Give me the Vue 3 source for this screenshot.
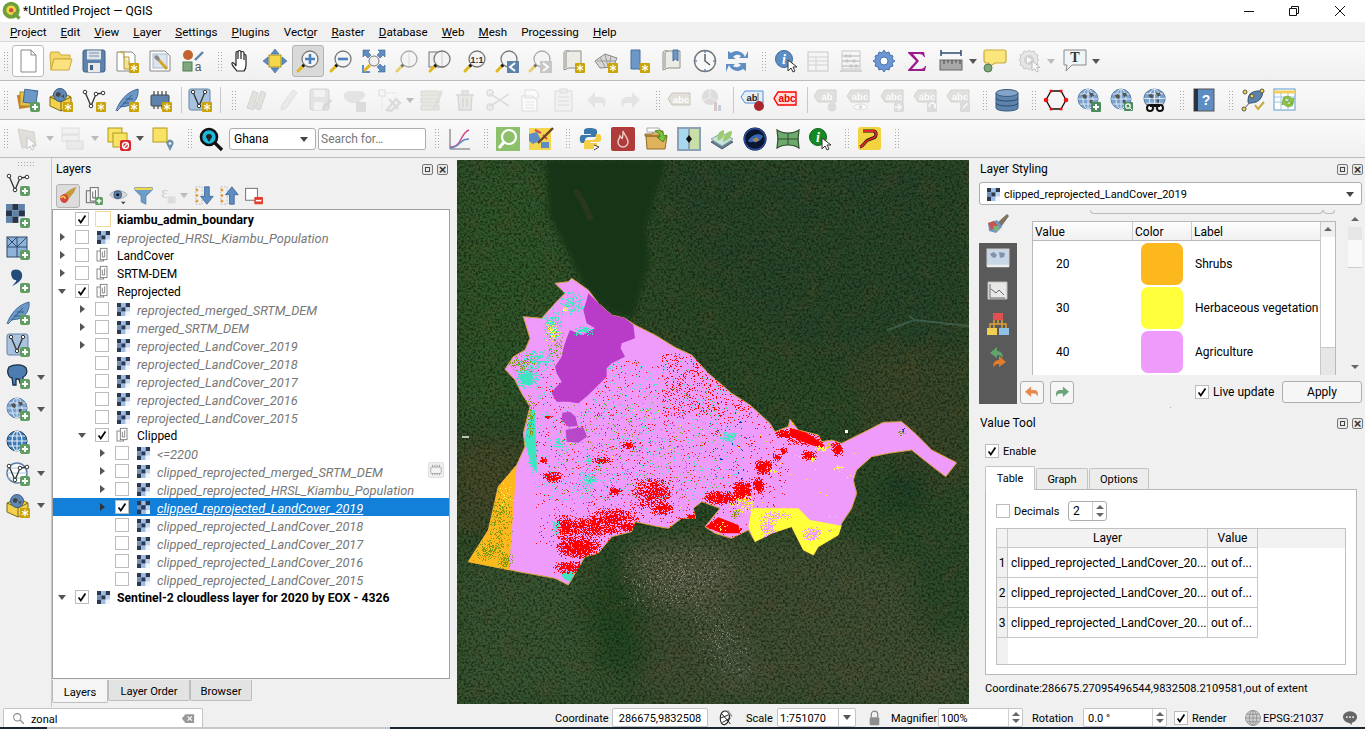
<template>
  <div class="qgis">
    <div class="titlebar">
      <svg class="logo" viewBox="0 0 24 24"><circle cx="11" cy="11" r="8" fill="#f2d648" stroke="#6f9f3a" stroke-width="4.5"/><circle cx="11" cy="11" r="2.6" fill="#c9503c"/><path d="M14 14l7 7" stroke="#6f9f3a" stroke-width="4"/></svg>
      <span class="wintitle">*Untitled Project — QGIS</span>
      <div class="winbtns">
        <svg viewBox="0 0 12 12" class="wmin"><path d="M1 6.5h10" stroke="#111"/></svg>
        <svg viewBox="0 0 12 12" class="wmax"><path d="M1.5 3.5h7v7h-7zM3.5 3.5v-2h7v7h-2" fill="none" stroke="#111"/></svg>
        <svg viewBox="0 0 12 12" class="wclose"><path d="M1 1l10 10M11 1L1 11" stroke="#111"/></svg>
      </div>
    </div>

    <div class="menubar">
      <span v-for="m in menus" :key="m[0] + m[1]" class="menu">{{ m[0] }}<u>{{ m[1] }}</u>{{ m[2] }}</span>
    </div>

    <div v-for="(row, r) in toolbars" :key="r" class="toolbar">
      <template v-for="(t, n) in row" :key="n">
        <span v-if="t.i === 'handle'" class="handle" :style="{ marginLeft: t.ml + 'px' }"></span>
        <span v-else-if="t.i === 'sep'" class="sep" :style="{ marginLeft: t.ml + 'px' }"></span>
        <span v-else-if="t.i === 'dd'" class="dd" :class="{ off: t.dis }" :style="{ marginLeft: t.ml + 'px' }"></span>
        <span v-else-if="t.i === 'combo'" class="combo" :style="{ marginLeft: t.ml + 'px', width: t.w + 'px' }">Ghana<i class="caret"></i></span>
        <span v-else-if="t.i === 'find'" class="findbox" :style="{ marginLeft: t.ml + 'px', width: t.w + 'px' }">Search for…</span>
        <span v-else class="tbtn" :class="{ pressed: t.on, boxed: t.box }" :style="{ marginLeft: t.ml + 'px' }">
          <svg class="ic" :class="{ dis: t.dis }" viewBox="0 0 24 24" v-html="icons[t.i]"></svg>
        </span>
      </template>
    </div>

    <div class="body">
      <div class="leftbar">
        <span class="hhandle"></span>
        <div v-for="b in leftIcons" :key="b.i" class="lbtn">
          <svg class="ic" viewBox="0 0 24 24" v-html="icons[b.i]"></svg>
          <i v-if="b.dd" class="dd"></i>
        </div>
      </div>

      <div class="layers">
        <div class="docktitle">
          <span>Layers</span>
          <span class="dockbtns"><i class="dfloat"></i><i class="dclose"></i></span>
        </div>
        <div class="layertools">
          <span v-for="(b, n) in layerTools" :key="n" class="ltool" :class="{ pressed: b.on }" :style="{ width: b.w + 'px' }">
            <svg class="ic20" viewBox="0 0 24 24" v-html="icons[b.i]"></svg>
            <i v-if="b.dd" class="dd off"></i>
          </span>
        </div>
        <div class="tree">
          <div v-for="(l, n) in layerRows" :key="n" class="trow" :class="{ sel: l.sel }" :style="{ paddingLeft: 6 + l.lvl * 20 + 'px' }">
            <i class="arrow" :class="l.arrow"></i>
            <span class="cb" :class="{ on: l.on }"><svg v-if="l.on" viewBox="0 0 14 14"><path d="M3 7.5l2.6 3.6L11 3" fill="none" stroke="#000" stroke-width="2"/></svg></span>
            <span class="licon">
              <svg v-if="l.kind === 'poly'" viewBox="0 0 16 16" class="k16"><rect x=".5" y=".5" width="15" height="15" fill="#fff" stroke="#f5d9a0"/></svg>
              <svg v-else-if="l.kind === 'group'" viewBox="0 0 24 24" class="k16" v-html="icons.group"></svg>
              <svg v-else viewBox="0 0 13 13" class="k13" v-html="checker"></svg>
            </span>
            <span class="lname" :class="l.style">{{ l.name }}</span>
            <span v-if="l.chip" class="chipbtn"><svg viewBox="0 0 24 24" v-html="icons.chipgrey"></svg></span>
          </div>
        </div>
        <div class="bottomtabs">
          <span class="btab active">Layers</span>
          <span class="btab border">Layer Order</span>
          <span class="btab browser">Browser</span>
        </div>
      </div>

      <div class="map">
        <svg viewBox="457 160 512 544" width="512" height="544" class="mapsvg">
          <defs>
            <filter id="blur12" x="-30%" y="-30%" width="160%" height="160%"><feGaussianBlur stdDeviation="12"/></filter>
            <filter id="blur3" x="-10%" y="-10%" width="120%" height="120%"><feGaussianBlur stdDeviation="2.5"/></filter>
            <filter id="noiseDark" x="0" y="0" width="100%" height="100%" color-interpolation-filters="sRGB">
              <feTurbulence type="fractalNoise" baseFrequency="0.42" numOctaves="3" seed="7"/>
              <feColorMatrix values="0 0 0 0 0.04 0 0 0 0 0.08 0 0 0 0 0.02 3.2 0 0 0 -1.35"/>
            </filter>
            <filter id="noiseLight" x="0" y="0" width="100%" height="100%" color-interpolation-filters="sRGB">
              <feTurbulence type="fractalNoise" baseFrequency="0.6" numOctaves="2" seed="21"/>
              <feColorMatrix values="0 0 0 0 0.55 0 0 0 0 0.6 0 0 0 0 0.35 0 2.8 0 0 -1.35"/>
            </filter>
            <filter id="noiseBrown" x="0" y="0" width="100%" height="100%" color-interpolation-filters="sRGB">
              <feTurbulence type="fractalNoise" baseFrequency="0.05" numOctaves="4" seed="5"/>
              <feColorMatrix values="0 0 0 0 0.42 0 0 0 0 0.3 0 0 0 0 0.16 2.4 0 0 0 -1.1"/>
            </filter>
          </defs>
          <rect x="457" y="160" width="512" height="544" fill="#2b4a28"/>
          <g filter="url(#blur12)">
            <path d="M457 160h90l30 130 40 30-20 90-140 10z" fill="#2f552c"/>
            <path d="M650 160h320v280l-130-60-130-90z" fill="#27442a"/>
            <path d="M840 350h130v140h-70z" fill="#38462b"/>
            <path d="M457 440h60l10 60-70 40z" fill="#454a2a"/>
            <path d="M457 560h130l40 144H457z" fill="#375530"/>
            <path d="M640 540h200l130 60v104H640z" fill="#414f36"/>
            <path d="M900 520h70v120h-50z" fill="#2b482c"/>
            <ellipse cx="905" cy="490" rx="24" ry="24" fill="#1c4025"/>
            <path d="M580 590h60l10 70-50 20z" fill="#214624"/>
          </g>
          <rect x="457" y="160" width="512" height="544" filter="url(#noiseBrown)" opacity=".22"/>
          <g filter="url(#blur12)">
            <path d="M625 545h100l20 40-45 25-60-20z" fill="#5f604e" opacity=".8"/>
            <path d="M690 600l40 20 30 60-30 10-20-50z" fill="#565d49" opacity=".7"/>
          </g>
          <rect x="457" y="160" width="512" height="544" filter="url(#noiseDark)" opacity=".6"/>
          <rect x="457" y="160" width="512" height="544" filter="url(#noiseLight)" opacity=".1"/>
          <path d="M546 160h120l-20 66 3 35-15 55-21-2-27-25-17-35-20-39z" fill="#193418" filter="url(#blur3)"/>
          <path d="M575 190l8 12 8 18" stroke="#3c3a22" stroke-width="6" fill="none" opacity=".5"/>
          <path :d="urban" fill="#b7b5a0" opacity=".55" shape-rendering="crispEdges"/>
          <path d="M887 330l28-10-6-4M915 320l54 6" stroke="#47705f" stroke-width="2" fill="none" opacity=".6"/>
          <path d="M462 437h7" stroke="#eee" stroke-width="1.5"/>
          <path d="M845 430h3v3h-3z" fill="#fff"/>

          <g transform="translate(455 260) scale(0.33333)">
            <polygon :points="outline" fill="#ee9bfb" stroke="#d8a33a" stroke-width="3"/>
            <path v-for="p in specks" :key="p.c + p.d.length" :d="p.d" :fill="p.c" shape-rendering="crispEdges"/>
            <polygon points="400,100 430,130 470,165 510,175 535,195 540,235 500,250 497,265 510,290 470,310 455,325 455,350 430,375 400,405 370,430 340,425 305,425 290,400 300,385 320,365 305,340 300,320 320,290 325,265 335,235 345,210 380,225 420,205 395,190 385,150 395,120" fill="#b93cc9"/>
            <polygon points="322,458 345,455 362,470 368,498 340,500 320,480" fill="#b648c9"/>
            <polygon points="332,510 360,505 385,502 396,530 370,548 335,545" fill="#b648c9"/>
            <polygon points="185,615 162,930 190,936 40,905 100,810 130,680" fill="#fdb81e"/>
            <polygon points="890,745 1030,745 1065,780 1160,797 1150,825 1090,860 1075,885 1045,870 1010,800 950,820 900,845 880,800" fill="#ffff3c"/>
            <polygon points="752,800 790,772 850,795 855,820 800,820" fill="#ff0000"/>
            <polygon points="1005,503 1055,518 1108,555 1108,568 1060,552 1005,528" fill="#ff0000"/>
            <polygon points="228,450 240,450 246,640 232,620 208,540" fill="#3ee4c0"/>
            <polygon points="190,345 232,335 232,375 200,370" fill="#3ee4c0"/>
            <polygon points="318,940 360,932 345,965 325,955" fill="#3ee4c0"/>
            <path v-for="p in topSpecks" :key="p.c + p.d.length" :d="p.d" :fill="p.c" shape-rendering="crispEdges"/>
          </g>
        </svg>
      </div>

      <div class="rightpanel">
        <div class="docktitle">
          <span>Layer Styling</span>
          <span class="dockbtns"><i class="dfloat"></i><i class="dclose"></i></span>
        </div>
        <div class="combo layercombo"><svg viewBox="0 0 13 13" class="k13" v-html="checker"></svg><span>clipped_reprojected_LandCover_2019</span><i class="caret"></i></div>
        <div class="styling">
          <div class="side">
            <div class="sidebrush"><svg class="ic" viewBox="0 0 24 24" v-html="icons.brush2"></svg></div>
            <div class="sidedark">
              <svg v-for="s in sideIcons" :key="s" class="ic" viewBox="0 0 24 24" v-html="icons[s]"></svg>
            </div>
          </div>
          <div class="stylemain">
            <div class="scrollarea">
              <div class="scrollinner">
                <div class="groupline"><span></span><span class="gl2"></span></div>
                <div class="legend">
                  <div class="legendbody">
                    <div class="lhead"><span class="c1">Value</span><span class="c2">Color</span><span class="c3">Label</span></div>
                    <div class="lrows">
                      <div v-for="c in classes" :key="c.color" class="lrow">
                        <span class="c1 val">{{ c.v }}</span>
                        <span class="c2"><i class="swatch" :style="{ background: c.color }"></i></span>
                        <span class="c3 lab">{{ c.label }}</span>
                      </div>
                    </div>
                  </div>
                  <div class="vscroll inner"><i class="up"></i><i class="thumb"></i><i class="rest"></i></div>
                </div>
              </div>
              <div class="vscroll outer"><i class="up"></i><i class="band"></i><i class="thumb"></i><i class="dn"></i></div>
            </div>
            <div class="actions">
              <span class="sbtn"><svg viewBox="0 0 24 24" v-html="icons.undoO"></svg></span>
              <span class="sbtn"><svg viewBox="0 0 24 24" v-html="icons.redoG"></svg></span>
              <span class="cb on live"><svg viewBox="0 0 14 14"><path d="M3 7.5l2.6 3.6L11 3" fill="none" stroke="#000" stroke-width="2"/></svg></span>
              <span class="livetext">Live update</span>
              <span class="applybtn">Apply</span>
            </div>
          </div>
        </div>
        <div class="splitdots"></div>
        <div class="docktitle valuetitle">
          <span>Value Tool</span>
          <span class="dockbtns"><i class="dfloat"></i><i class="dclose"></i></span>
        </div>
        <div class="enable">
          <span class="cb on"><svg viewBox="0 0 14 14"><path d="M3 7.5l2.6 3.6L11 3" fill="none" stroke="#000" stroke-width="2"/></svg></span>
          <span>Enable</span>
        </div>
        <div class="vtabs">
          <span class="vtab active">Table</span>
          <span class="vtab g">Graph</span>
          <span class="vtab o">Options</span>
        </div>
        <div class="vpane">
          <div class="decimals">
            <span class="cb"></span><span class="dectext">Decimals</span>
            <span class="spin"><span>2</span><i class="spinbtns"></i></span>
          </div>
          <div class="vtable">
            <div class="vhead"><span class="vcorner"></span><span class="vcol1">Layer</span><span class="vcol2">Value</span></div>
            <div v-for="n in 3" :key="n" class="vrow">
              <span class="vnum">{{ n }}</span>
              <span class="vcell1">clipped_reprojected_LandCover_20...</span>
              <span class="vcell2">out of...</span>
            </div>
            <div class="vempty"></div>
          </div>
        </div>
        <div class="coordline">Coordinate:286675.27095496544,9832508.2109581,out of extent</div>
      </div>
    </div>

    <div class="statusbar">
      <div class="locator">
        <svg viewBox="0 0 16 16" class="s14"><circle cx="6.5" cy="6.5" r="4.5" fill="none" stroke="#888" stroke-width="1.3"/><path d="M10 10l4.5 4.5" stroke="#888" stroke-width="1.6"/></svg>
        <span class="zonal">zonal</span>
        <svg viewBox="0 0 16 12" class="clearx"><path d="M5 1h10v10H5L1 6z" fill="#999"/><path d="M7.5 3.5l5 5M12.5 3.5l-5 5" stroke="#fff" stroke-width="1.3"/></svg>
      </div>
      <span class="st coordlab">Coordinate</span>
      <span class="stbox coordval">286675,9832508</span>
      <svg viewBox="0 0 24 24" class="mouse" v-html="icons.mouse"></svg>
      <span class="st scalelab">Scale</span>
      <span class="stbox scalebox"><span>1:751070</span><i class="caretbox"></i></span>
      <svg viewBox="0 0 16 20" class="lock"><path d="M4 9V5.5a4 4 0 018 0V9" fill="none" stroke="#888" stroke-width="1.6"/><rect x="2" y="9" width="12" height="10" rx="1.5" fill="#8d8d8d"/></svg>
      <span class="st maglab">Magnifier</span>
      <span class="stbox magbox"><span>100%</span><i class="spinbtns"></i></span>
      <span class="st rotlab">Rotation</span>
      <span class="stbox rotbox"><span>0.0 °</span><i class="spinbtns"></i></span>
      <span class="cb on rendercb"><svg viewBox="0 0 14 14"><path d="M3 7.5l2.6 3.6L11 3" fill="none" stroke="#000" stroke-width="2"/></svg></span>
      <span class="st renderlab">Render</span>
      <svg viewBox="0 0 24 24" class="epsg" v-html="icons.globegrey"></svg>
      <span class="st epsgtxt">EPSG:21037</span>
      <svg viewBox="0 0 18 18" class="msg"><ellipse cx="9" cy="8" rx="8" ry="6.5" fill="#666"/><path d="M6 13l5 4v-4z" fill="#666"/><circle cx="5.5" cy="8" r="1.1" fill="#fff"/><circle cx="9" cy="8" r="1.1" fill="#fff"/><circle cx="12.5" cy="8" r="1.1" fill="#fff"/></svg>
    </div>
    <div class="taskstrip"><i></i></div>
  </div>
</template>

<script setup>
const menus = [
  ['', 'P', 'roject'], ['', 'E', 'dit'], ['', 'V', 'iew'], ['', 'L', 'ayer'], ['', 'S', 'ettings'], ['', 'P', 'lugins'],
  ['Vect', 'o', 'r'], ['', 'R', 'aster'], ['', 'D', 'atabase'], ['', 'W', 'eb'], ['', 'M', 'esh'], ['Pro', 'c', 'essing'], ['', 'H', 'elp']
]

const checker = ['#2a3950', '#9dbde6', '#2a3950', '#6f8fb8', '#2a3950', '#b9d0ee', '#2a3950', '#9dbde6', '#f2f6fb']
  .map((c, i) => `<rect x="${(i % 3) * 4.33}" y="${Math.floor(i / 3) * 4.33}" width="4.34" height="4.34" fill="${c}"/>`).join('')

// badges shared by the toolbar icons
const star = `<rect x="14" y="14" width="10" height="10" rx="1" fill="#c9a30a"/><path d="M19 15.5v7M15.9 17.2l6.2 3.6M15.9 20.8l6.2-3.6" stroke="#fff" stroke-width="1.2"/>`
const plus = `<rect x="14" y="14" width="10" height="10" rx="2" fill="#5f9c62"/><path d="M19 16v6M16 19h6" stroke="#fff" stroke-width="2"/>`
const lens = (inner = '', fill = '#f4f4f4') => `<path d="M8 16l-6 6" stroke="#e0b81e" stroke-width="3" stroke-linecap="round"/><path d="M9 15l-2.5 2.5" stroke="#111" stroke-width="3"/><circle cx="14" cy="10" r="8" fill="${fill}" stroke="#777" stroke-width="1.3"/>${inner}`
const globe = `<circle cx="11" cy="11" r="10" fill="#7ba3cf" stroke="#5b80a8"/><path d="M1 11h20M11 1v20M3 6h16M3 16h16" stroke="#e4edf6" stroke-width=".9" fill="none"/><ellipse cx="11" cy="11" rx="5" ry="10" fill="none" stroke="#e4edf6" stroke-width=".9"/><path d="M5 7l3-1 2 2-1 3-3-1zM12 5h4l1 3-3 1zM13 12h3l-1 4-2-1z" fill="#555"/>`
const box3d = `<path d="M1 9l11-5 10 5v9l-10 5-11-5z" fill="#f2d24c" stroke="#7a6912"/><path d="M1 9l11 5 10-5M12 14v9" fill="none" stroke="#7a6912"/><circle cx="11" cy="7" r="6.5" fill="#5f87b3" stroke="#3d5f86"/><path d="M7 5l3-1 2 2-2 3-3-1zM12 8l3-1v3z" fill="#444"/>`
const vline = `<path d="M3 4l6 14 5-12 7-1" fill="none" stroke="#333" stroke-width="1.3"/><circle cx="3" cy="4" r="1.8" fill="#fff" stroke="#333"/><circle cx="9" cy="18" r="1.8" fill="#fff" stroke="#333"/><circle cx="14" cy="6" r="1.8" fill="#fff" stroke="#333"/><circle cx="21" cy="5" r="1.8" fill="#fff" stroke="#333"/>`
const feather = `<path d="M1 23C4 14 11 4 23 1c1 7-3 15-11 17l-7 1" fill="#6d97c4" stroke="#3e6a99"/><path d="M2 23L17 7M8 15h6M11 11h7" stroke="#2f5d8a" fill="none"/>`
const vbox = `<rect x="1" y="1" width="21" height="21" rx="2" fill="#a9c2de" stroke="#6384a8"/><path d="M5 4l6 14 6-14" fill="none" stroke="#333" stroke-width="1.3"/><circle cx="5" cy="4" r="1.7" fill="#fff" stroke="#333"/><circle cx="11" cy="18" r="1.7" fill="#fff" stroke="#333"/><circle cx="17" cy="4" r="1.7" fill="#fff" stroke="#333"/>`
const chip = c => `<rect x="3" y="7" width="18" height="11" rx="1" fill="${c}" stroke="#444"/><path d="M6 3v4M10 3v4M14 3v4M18 3v4M6 18v3M10 18v3M14 18v3M18 18v3" stroke="#444" stroke-width="1.2"/>`
const abc = (t, fill = '#e2e0d9', col = '#fff', stroke = '#c8c6be') => `<path d="M5 5h18v12H5L1 11z" fill="${fill}" stroke="${stroke}"/><text x="14" y="14.5" text-anchor="middle" font-family="Liberation Sans" font-weight="700" font-size="9.5" fill="${col}">${t}</text>`
const abcG = (t, extra) => `<g transform="translate(0 -3)">${abc(t, '#d4d2cb', '#fff', '#bbb')}</g>${extra}`
const sheet = `<path d="M3 4c0-2 2-3 4-2h13v17H8l-5 2z" fill="#ecebe6" stroke="#8f8f8a"/><path d="M8 2c-2 0-3 1-3 3v14" fill="none" stroke="#8f8f8a"/>`
const page = `<path d="M5 1h10l5 5v17H5z" fill="#fff" stroke="#888"/><path d="M15 1v5h5" fill="none" stroke="#888"/>`

const icons = {
  new: page,
  open: `<path d="M1 6l1-3h8l2 3h9v4H5l-3 11z" fill="#f5d66a" stroke="#c9a93a"/><path d="M5 10h18l-3 11H2z" fill="#fbe27f" stroke="#c9a93a"/>`,
  save: `<rect x="1" y="1" width="22" height="22" rx="2" fill="#5d83ad" stroke="#3f5f85"/><rect x="5" y="1.5" width="14" height="9" fill="#dfe5ec"/><path d="M7 4h10M7 7h10" stroke="#7d8ea3"/><rect x="6" y="14" width="12" height="9" fill="#e8e8e8"/><rect x="8" y="16" width="3" height="5" fill="#3f5f85"/>`,
  layoutnew: `<path d="M2 3h15l3 3v16H2z" fill="#fff" stroke="#888"/><path d="M5 3h4v17h12" fill="#f3e19a" stroke="#b0962a"/><path d="M8 8h6v8" fill="none" stroke="#b0962a"/>${star}`,
  layoutmgr: `<path d="M2 2h15l5 5v15H2z" fill="#fff" stroke="#888"/><rect x="5" y="5" width="14" height="14" fill="#dde6f0" stroke="#a9b7c8"/><path d="M9 9l10 11" stroke="#d0a52a" stroke-width="3"/><path d="M8 6a4 4 0 013 6l-3-1-2-3z" fill="#888"/>`,
  style: `<circle cx="7" cy="6" r="5" fill="#c4622f"/><path d="M14 11L22 3" stroke="#5d83ad" stroke-width="2.4"/><rect x="2" y="13" width="9" height="9" fill="#7fa87d" stroke="#507a50"/><text x="17" y="22" font-family="Liberation Sans" font-size="12" fill="#555" text-anchor="middle">a</text>`,
  hand: `<path d="M7 22c-2-3-6-6-5-8 1-1 3 1 4 3V4c0-2 2-2 2 0v6-7c0-2 3-2 3 0v7-6c0-2 3-2 3 0v7-4c0-2 2-2 2 0v9c0 4-1 5-2 6z" fill="#fff" stroke="#222" stroke-width="1.2"/>`,
  pan: `<rect x="6" y="6" width="12" height="12" fill="#f3d84a" stroke="#a68f1c"/><path d="M12 0l4 5H8zM12 24l4-5H8zM0 12l5-4v8zM24 12l-5-4v8z" fill="#5d8dc2" stroke="#3a628f" stroke-width=".6"/>`,
  zin: lens(`<path d="M14 5v10M9 10h10" stroke="#4a80bb" stroke-width="2.6"/>`),
  zout: lens(`<path d="M9 10h10" stroke="#4a80bb" stroke-width="2.6"/>`),
  zfull: `<path d="M1 1h7L6 3l3 3-3 3-3-3-2 2zM23 1h-7l2 2-3 3 3 3 3-3 2 2zM23 23h-7l2-2-3-3 3-3 3 3 2-2z" fill="#5d8dc2" stroke="#3a628f" stroke-width=".6"/><path d="M1 16v7h7" fill="none" stroke="#5d8dc2" stroke-width="2"/><path d="M8 16l-6 6" stroke="#e0b81e" stroke-width="3"/><circle cx="12" cy="12" r="5" fill="#f0f0f0" stroke="#777"/>`,
  zsel: lens(`<path d="M14 3v14" stroke="#ccc"/>`),
  zlayer: `<rect x="1" y="3" width="15" height="15" fill="#f0f0f0" stroke="#777"/>` + lens(`<path d="M14 3v14" stroke="#ccc"/>`),
  z11: lens(`<text x="14" y="13.5" text-anchor="middle" font-family="Liberation Sans" font-weight="700" font-size="9" fill="#333">1:1</text>`),
  zlast: lens() + `<rect x="12" y="12" width="12" height="12" fill="#5d83ad"/><path d="M20 14l-5 4 5 4" fill="none" stroke="#fff" stroke-width="2"/>`,
  znext: lens() + `<rect x="12" y="12" width="12" height="12" fill="#aaa"/><path d="M15 14l5 4-5 4" fill="none" stroke="#fff" stroke-width="2"/>`,
  newmap: sheet + star,
  new3d: `<path d="M1 12l10-7 12 4-4 9-13 1z" fill="#d8d8d4" stroke="#888"/><path d="M6 8l5 10M11 5l3 13M17 7l-2 11M3 12h18" stroke="#999" fill="none"/>${star}`,
  bookmark: `<path d="M5 1h9v14l4 5-3 2-2-2H5z" fill="#6d97c4" stroke="#46709e"/>${star}`,
  bookmarks: sheet + `<path d="M13 1h5v11l-2.5-2-2.5 2z" fill="#6d97c4" stroke="#46709e"/>`,
  clock: `<circle cx="12" cy="12" r="10.5" fill="#f8f8f8" stroke="#777" stroke-width="1.4"/><path d="M12 5v7l5 4" fill="none" stroke="#555" stroke-width="1.4"/><path d="M12 2v2M12 20v2M2 12h2M20 12h2" stroke="#5d8dc2" stroke-width="1.5"/>`,
  refresh: `<path d="M20 8A9 9 0 006 4L3 2v8h8L8 8a5.5 5.5 0 018-1l-2 2h9V2z" fill="#5d8dc2"/><path d="M4 16a9 9 0 0014 4l3 2v-8h-8l3 2a5.5 5.5 0 01-8 1l2-2H1v8z" fill="#5d8dc2"/>`,
  identify: `<circle cx="9" cy="10" r="8.5" fill="#5d8dc2" stroke="#3f6a99"/><text x="9" y="15" text-anchor="middle" font-family="Liberation Serif" font-style="italic" font-weight="700" font-size="14" fill="#fff">i</text><path d="M13 11v11l3-3 2 4 2-1-2-4h4z" fill="#fff" stroke="#333"/>`,
  table: `<rect x="2" y="3" width="20" height="19" fill="#f4f4f4" stroke="#aaa"/><path d="M2 8h20M2 12h20M2 16h20M10 8v14" stroke="#bbb"/>`,
  abacus: `<rect x="3" y="2" width="18" height="18" fill="none" stroke="#aaa"/><path d="M1 22h22M3 7h18M3 12h18M3 17h18" stroke="#aaa" stroke-width="1.3"/><path d="M7 7h.1M11 7h.1M15 12h.1M8 12h.1M12 17h.1M17 17h.1" stroke="#aaa" stroke-width="3.5" stroke-linecap="round"/>`,
  gear: `<path d="M12 1l2 3 3-1 1 3 3 1-1 3 3 2-3 2 1 3-3 1-1 3-3-1-2 3-2-3-3 1-1-3-3-1 1-3-3-2 3-2-1-3 3-1 1-3 3 1z" fill="#6d97d4" stroke="#4a73ad"/><circle cx="12" cy="12" r="4" fill="#fff" stroke="#4a73ad"/>`,
  sigma: `<path d="M3 3h16l1 5h-1c-1-2-2-3-5-3H8l6 7-7 8h8c3 0 4-1 5-3h1l-1 5H3v-1l8-9-8-8z" fill="#9c1b8c"/>`,
  ruler: `<path d="M2 4h20M2 1v6M22 1v6" stroke="#2f4d73" stroke-width="1.5"/><rect x="1" y="11" width="22" height="10" fill="#a8a8a8" stroke="#666"/><path d="M5 11v4M9 11v3M13 11v4M17 11v3M21 11v4" stroke="#444"/>`,
  speech: `<path d="M3 1h18c1 0 2 1 2 2v8c0 2-1 3-2 3H12l-6 4v-4H3c-1 0-2-1-2-3V3c0-1 1-2 2-2z" fill="#fbe67c" stroke="#c9a93a" stroke-width="1.2"/><circle cx="5" cy="19" r="4" fill="#7fa87d" stroke="#507a50"/>`,
  gearplay: `<path d="M11 1l2 2 3-1 1 3 3 1-1 3 2 2-2 2 1 3-3 1-1 3-3-1-2 2-2-2-3 1-1-3-3-1 1-3-2-2 2-2-1-3 3-1 1-3 3 1z" fill="#ddd" stroke="#aaa"/><circle cx="11" cy="11" r="5" fill="#bbb"/><path d="M9 8v6l5-3z" fill="#fff"/><path d="M14 12v10l2.5-2.5 2 3.5 2-1-2-3.5h3.5z" fill="#fff" stroke="#999"/>`,
  textT: `<path d="M1 1h22v15H9l-6 6 1-6H1z" fill="#eef5f8" stroke="#8a8a8a"/><text x="12" y="13" text-anchor="middle" font-family="Liberation Serif" font-weight="700" font-size="14" fill="#333">T</text>`,

  dsm: `<rect x="2" y="6" width="14" height="14" fill="#d07c2c" transform="rotate(-10 9 13)"/><rect x="4" y="4" width="14" height="14" fill="#e8c14a" stroke="#a68f1c"/><rect x="8" y="2" width="13" height="13" fill="#6d97c4" stroke="#3e6a99" transform="rotate(8 14 8)"/>${plus}`,
  gpkg: box3d + star,
  vnew: vline + star,
  feat: feather + star,
  chipstar: chip('#5d83ad') + star,
  vboxstar: vbox + star,
  pencils: `<path d="M3 20L9 3l5 2-5 17zM11 20l6-17 5 2-6 17z" fill="#d8d5cd" stroke="#bbb"/>`,
  pencil: `<path d="M5 22l1-5L17 2l4 3-11 15z" fill="#e4e4e4" stroke="#ccc"/>`,
  savepen: `<rect x="1" y="1" width="19" height="21" rx="2" fill="#d8d8d8" stroke="#bbb"/><rect x="5" y="2" width="11" height="7" fill="#f0f0f0"/><rect x="5" y="14" width="9" height="8" fill="#f0f0f0"/><path d="M13 22l1-4 7-7 2 2-7 7z" fill="#c4c4c4"/>`,
  blobstar: `<path d="M2 6c2-4 8-3 11-3s9-1 10 3-3 4-5 7-5 2-8 2-10-4-8-9z" fill="#d8d8d8"/><rect x="14" y="14" width="10" height="10" rx="1" fill="#ccc"/>`,
  toolx: `<rect x="1" y="2" width="6" height="6" fill="none" stroke="#ccc"/><path d="M7 5h12M4 8v12" stroke="#ddd"/><path d="M9 22L18 11l4 4-9 8zM11 11l9 10" stroke="#ccc" stroke-width="2.5" fill="none"/>`,
  listpen: `<path d="M1 3h18v5H1zM1 10h18v5H1zM1 17h18v5H1z" fill="#dedcd4" stroke="#c8c6be"/><path d="M12 22l2-5L21 2l2 1-6 16z" fill="#d0d0d0"/>`,
  trash: `<path d="M3 7h18M5 7l1 15h12l1-15M9 3h6v4H9zM10 10v9M14 10v9" fill="#e0ded7" stroke="#c4c4c4" stroke-width="1.4"/>`,
  scissors: `<path d="M3 5l20 13M3 19L23 6" stroke="#ccc" stroke-width="1.5"/><circle cx="4" cy="5" r="3" fill="none" stroke="#ccc" stroke-width="1.5"/><circle cx="4" cy="19" r="3" fill="none" stroke="#ccc" stroke-width="1.5"/>`,
  copy: `<path d="M6 2h10l3 3v5H6zM3 8h11l4 4v11H3z" fill="#fff" stroke="#ccc"/><path d="M6 14h9M6 17h9M6 20h9" stroke="#ddd"/>`,
  paste: `<rect x="3" y="3" width="17" height="20" fill="#f0f0f0" stroke="#ccc"/><rect x="8" y="1" width="7" height="4" fill="#e4e4e4" stroke="#ccc"/><path d="M6 9h11M6 13h11M6 17h11" stroke="#ccc"/>`,
  undo: `<path d="M10 4L2 12l8 8v-5h5c3 0 4 2 4 5 3-5 2-11-4-11h-5z" fill="#d8d8d8"/>`,
  redo: `<path d="M14 4l8 8-8 8v-5H9c-3 0-4 2-4 5-3-5-2-11 4-11h5z" fill="#d8d8d8"/>`,
  abc: abc('abc'),
  chartdis: `<circle cx="10" cy="9" r="8" fill="#ccc"/><path d="M10 9V1M10 9l7 4M10 9l-7 4" stroke="#eee"/><rect x="14" y="14" width="3" height="9" fill="#c9a7a7"/><rect x="18" y="17" width="3" height="6" fill="#a7b8c9"/>`,
  abpin: `<path d="M5 3h18v12H5L1 9z" fill="#e8eef6" stroke="#4c90e0"/><text x="12" y="12.5" text-anchor="middle" font-family="Liberation Sans" font-weight="700" font-size="9.5" fill="#222">ab</text><path d="M18 5v10" stroke="#aaa" stroke-width="2"/><circle cx="19" cy="18" r="5" fill="#a9262c"/>`,
  abcred: `<path d="M5 4h18v13H5L1 10.5z" fill="#fdd" stroke="#f00" stroke-width="1.4"/><text x="14" y="14" text-anchor="middle" font-family="Liberation Sans" font-weight="700" font-size="10" fill="#e00">abc</text>`,
  abpindis: abcG('ab', `<circle cx="19" cy="19" r="4.5" fill="#ccc"/>`),
  abceye: abcG('abc', `<path d="M7 19c4-4 11-4 15 0-4 4-11 4-15 0z" fill="#fff" stroke="#ccc"/><circle cx="14.5" cy="19" r="2" fill="#ccc"/>`),
  abcarr: abcG('abc', `<rect x="14" y="14" width="10" height="10" rx="1" fill="#ccc"/><path d="M15 19h5M18 16l3 3-3 3" stroke="#fff" stroke-width="1.6" fill="none"/>`),
  abcrot: abcG('abc', `<rect x="14" y="14" width="10" height="10" rx="1" fill="#ccc"/><path d="M16.5 19a3 3 0 115 1" stroke="#fff" stroke-width="1.5" fill="none"/>`),
  abcpen: abcG('abc', `<rect x="14" y="14" width="10" height="10" rx="1" fill="#ccc"/><path d="M16 22l1-3 4-4 1 1-4 4z" fill="#fff"/>`),
  db: `<path d="M1 5v15c0 4 22 4 22 0V5z" fill="#5d83ad" stroke="#3a5a80"/><ellipse cx="12" cy="5" rx="11" ry="3.5" fill="#82a4c9" stroke="#3a5a80"/><path d="M1 10c0 4 22 4 22 0M1 15c0 4 22 4 22 0" fill="none" stroke="#2d4a6d"/>`,
  hex: `<path d="M7 3h10l5 9-5 9H7l-5-9z" fill="none" stroke="#111" stroke-width="1.3"/><path d="M7 3h.1M17 3h.1M7 21h.1M17 21h.1" stroke="#e11" stroke-width="3" stroke-linecap="round"/><path d="M2 12h.1M22 12h.1" stroke="#e11" stroke-width="4.5" stroke-linecap="round"/>`,
  globeadd: globe + `<rect x="14" y="14" width="10" height="10" rx="1" fill="#4d8a5c"/><path d="M19 16v6M16 19h6" stroke="#fff" stroke-width="2"/>`,
  globefind: globe + `<rect x="14" y="14" width="9" height="9" rx="1" fill="#4d8a5c"/><circle cx="18" cy="18" r="2.2" fill="none" stroke="#fff" stroke-width="1.3"/><path d="M20 20l2 2" stroke="#fff"/>`,
  globebino: `<g transform="scale(1.05 .95)">${globe}</g><circle cx="7" cy="20" r="4" fill="#111"/><circle cx="17" cy="20" r="4" fill="#111"/><circle cx="7" cy="20" r="2" fill="#fff"/><circle cx="17" cy="20" r="2" fill="#fff"/><path d="M7 16h10v3H7z" fill="#111"/>`,
  help: `<rect x="2" y="1" width="20" height="22" fill="#5d8dc2" stroke="#555"/><rect x="2" y="1" width="4" height="22" fill="#2a3440"/><text x="14" y="17" text-anchor="middle" font-family="Liberation Sans" font-weight="700" font-size="14" fill="#fff">?</text>`,
  nodecheck: `<path d="M4 20l6-7L20 3" stroke="#555" fill="none"/><path d="M9 6c3-3 10-4 12-2s-2 9-6 10-8 2-8 0 0-6 2-8z" fill="#5d83ad" stroke="#33506f"/><path d="M14 17l3 4 6-7" stroke="#c9a93a" stroke-width="2" fill="none"/><circle cx="3" cy="21" r="2" fill="#f3d84a" stroke="#555"/><circle cx="4" cy="4" r="2" fill="#f3d84a" stroke="#555"/><circle cx="21" cy="3" r="2" fill="#f3d84a" stroke="#555"/><circle cx="11" cy="8" r="2" fill="#f3d84a" stroke="#555"/>`,
  tablesync: `<rect x="1" y="1" width="21" height="21" fill="#fff" stroke="#5d9bcf"/><path d="M1 4h21" stroke="#f3cf5a" stroke-width="3"/><path d="M1 9h21M1 14h21M8 5v17M15 5v17" stroke="#9cc4e4"/><path d="M10 10c3-3 8-2 9 1l2-1-1 6-5-3 2-1c-1-1-4-2-6 0z" fill="#8cc63f" stroke="#5a8c1f" stroke-width=".5"/><path d="M20 17c-3 3-8 2-9-1l-2 1 1-6 5 3-2 1c1 1 4 2 6 0z" fill="#8cc63f" stroke="#5a8c1f" stroke-width=".5"/>`,

  selarrow: `<path d="M2 2l16 3 2 14-14 2z" fill="#d4d0c6" stroke="#bbb8b0"/><path d="M11 10v12l3-3 2 4 2-1-2-4h4z" fill="#fff" stroke="#aaa"/>`,
  form: `<rect x="2" y="1" width="17" height="6" fill="#eee" stroke="#ccc"/><rect x="2" y="8" width="17" height="6" fill="#eee" stroke="#ccc"/><rect x="7" y="14" width="16" height="8" fill="#e4e4e4" stroke="#ccc"/>`,
  deselect: `<rect x="1" y="1" width="14" height="14" fill="#f9e264" stroke="#b09a1c"/><rect x="6" y="6" width="14" height="14" fill="#f9e264" stroke="#b09a1c"/><rect x="13" y="13" width="11" height="11" rx="2" fill="#d6282c"/><circle cx="18.5" cy="18.5" r="3" fill="none" stroke="#fff" stroke-width="1.4"/><path d="M16 21l5-5" stroke="#fff" stroke-width="1.4"/>`,
  selpin: `<rect x="2" y="1" width="14" height="14" fill="#f9e264" stroke="#b09a1c"/><path d="M19 24l-3-6a3.5 3.5 0 116 0z" fill="#6d90ad"/><circle cx="19" cy="16.5" r="1.3" fill="#fff"/>`,
  locate: `<circle cx="10" cy="10" r="8" fill="#1cb9dc" stroke="#111" stroke-width="2.6"/><path d="M16 16l7 7" stroke="#111" stroke-width="3.2"/><path d="M10 15l-3-5a3 3 0 116 0z" fill="#222"/>`,
  chart: `<path d="M3 2v20h20" fill="none" stroke="#666"/><path d="M3 20c5 0 8-2 10-6s5-10 9-11" fill="none" stroke="#d14a8b" stroke-width="1.5"/><path d="M3 21c6 0 9-4 11-6s5-3 8-3" fill="none" stroke="#5d8dc2" stroke-width="1.5"/>`,
  zoomg: `<rect width="24" height="24" fill="#8dc06a"/><circle cx="13" cy="10" r="7" fill="none" stroke="#fff" stroke-width="2.2"/><path d="M8 15l-5 6" stroke="#fff" stroke-width="3"/>`,
  mapbrush: `<rect y="1" width="22" height="22" fill="#f5d44e"/><path d="M0 7l8-2 4 8-8 4-4-3zM12 15h8v6h-8z" fill="#5d8dc2"/><path d="M6 3l6 3M14 8l4 4" stroke="#d14a5d" stroke-width="2"/><path d="M9 16L24 1" stroke="#6a4320" stroke-width="2.4"/>`,
  python: `<path d="M12 1C7 1 6 2 6 4v3h7v1H4c-3 0-3 8 0 8h3v-3c0-2 2-3 4-3h5c2 0 3-1 3-3V4c0-2-3-3-7-3z" fill="#3a78ae"/><path d="M13 22c5 0 6-1 6-3v-3h-7v-1h9c3 0 3-8 0-8h-3v3c0 2-2 3-4 3H9c-2 0-3 1-3 3v5c0 2 3 1 7 1z" fill="#f4cf45"/><path d="M16 18l5 2-5 3" fill="#fff" stroke="#444"/>`,
  flame: `<rect width="24" height="24" rx="2" fill="#b03b3b"/><path d="M12 4c1 4 5 6 5 11a5 5 0 01-10 0c0-3 2-4 2-6 1 1 2 2 2 3 1-2 1-5 1-8z" fill="none" stroke="#e8c9c0" stroke-width="1.5"/>`,
  folderarrow: `<path d="M1 7h7l2-3h9v5H1zM2 9h21l-2 13H3z" fill="#dfb25c" stroke="#8d6b2a"/><path d="M3 1h12l2 4H3z" fill="#fff" stroke="#aaa"/><path d="M11 4c5-2 8 0 9 5l3-1-4 7-6-5h3c0-3-2-5-5-6z" fill="#79c340" stroke="#4a8a1c"/>`,
  split: `<rect width="24" height="24" fill="#8aa1b8"/><rect x="2" y="2" width="9" height="20" fill="#a8d8f0"/><rect x="13" y="2" width="9" height="20" fill="#c8e0a8"/><path d="M12 8l3 4-3 4-3-4z" fill="#111"/>`,
  leaf: `<path d="M1 15l11-6 11 6-11 7z" fill="#667f8f" stroke="#4a6070"/><path d="M1 12l11-6 11 6-11 7z" fill="#c8e4e0" stroke="#88a8a8"/><path d="M8 14C6 8 9 4 14 3c0 5 0 8-6 11zM13 15c0-6 3-11 9-11 0 6-3 9-9 11z" fill="#9cca70"/>`,
  earth: `<circle cx="12" cy="12" r="11.5" fill="#0a1530"/><circle cx="12" cy="12" r="10.5" fill="none" stroke="#274d95" stroke-width="1.5"/><path d="M5 14c3-6 11-9 15-5-2 5-7 7-9 6s-3 2-6-1z" fill="#3568b4"/><path d="M9 13l5-3 2 3-3 2z" fill="#a88556"/>`,
  butterfly: `<path d="M1 3c3 2 6 3 11 3s8-1 11-3l-1 9 1 9c-3-2-7-3-11-3s-8 1-11 3l1-9z" fill="#6ea96e" stroke="#2f4f2f" stroke-width="1.2"/><path d="M12 6v12M1 12h22" stroke="#2f4f2f"/>`,
  igreen: `<circle cx="9" cy="10" r="8.5" fill="#158a23" stroke="#0c6218"/><text x="9" y="15" text-anchor="middle" font-family="Liberation Serif" font-style="italic" font-weight="700" font-size="14" fill="#fff">i</text><path d="M13 11v11l3-3 2 4 2-1-2-4h4z" fill="#fff" stroke="#333"/>`,
  route: `<rect width="23" height="23" rx="3" fill="#f2d23e"/><path d="M5 4h10c4 0 4 6 0 7l-5 2c-3 1-4 6-8 7" fill="none" stroke="#111" stroke-width="3.2"/><path d="M5 4h10c4 0 4 6 0 7l-5 2c-3 1-4 6-8 7" fill="none" stroke="#e3262c" stroke-width="1.8"/>`,

  vplus: vline + plus,
  checkplus: `<g transform="scale(.9)">${[0, 1, 2].flatMap(y => [0, 1, 2].map(x => `<rect x="${x * 7}" y="${y * 7}" width="7" height="7" fill="${(x + y) % 2 ? '#27354a' : (x === 2 && y === 2 ? '#dce8f6' : '#5d83ad')}"/>`)).join('')}</g>${plus}`,
  meshplus: `<rect x="1" y="1" width="20" height="20" fill="#8fb3d8" stroke="#2d4a6d"/><path d="M1 1l10 10M11 1L1 11M11 1v20M1 11h20M21 1L11 11" stroke="#2d4a6d"/>${plus}`,
  commaplus: `<path d="M7 1c6-2 10 2 9 7-1 4-5 7-10 9 3-3 5-5 4-6-4 1-7-8-3-10z" fill="#234d78"/>${plus}`,
  featplus: feather + plus,
  vboxplus: vbox + plus,
  elephant: `<path d="M3 2c5-3 14-3 17 1 2 4 0 8-3 9v6h-3l-1-4h-3v6H7L6 13C3 13 0 7 3 2z" fill="#4b7db0" stroke="#1c2f45" stroke-width="1.3"/>${plus}`,
  globeplus: globe + plus,
  globebig: `<circle cx="11" cy="11" r="10" fill="#3c79b8" stroke="#1c3d5f"/><path d="M1 11h20M11 1v20M3 6h16M3 16h16" stroke="#eaf1f8" stroke-width="1.1" fill="none"/><ellipse cx="11" cy="11" rx="5" ry="10" fill="none" stroke="#eaf1f8" stroke-width="1.1"/>${plus}`,
  globev: `<circle cx="11" cy="11" r="10" fill="#fff" stroke="#5b80a8" stroke-width="1.5"/><path d="M1 11h20M1 6h20M1 16h20" stroke="#a9c2de"/>${vline}${plus}`,
  gpkgsmall: box3d + star,

  brush: `<path d="M4 12l11-8 7-3-3 7-9 11z" fill="#c69a3a"/><path d="M1 14c4-5 8-5 10-1s0 7-3 8-6 0-7-7z" fill="#d6453c"/><path d="M2 15c3-3 5-2 6 1" fill="none" stroke="#f3d84a" stroke-width="2"/>`,
  brush2: `<path d="M11 11L21 2l2 2-8 11z" fill="#7d7360"/><path d="M2 11l9-3 5 7-6 6-7-2z" fill="#6d97c4"/><path d="M2 11l6-2 4 5-7 4z" fill="#c4574f"/><path d="M7 14h5l2 3-5 3z" fill="#7fb07a"/>`,
  group: `<rect x="3" y="6" width="10" height="15" fill="none" stroke="#777" stroke-width="1.3"/><rect x="8" y="2" width="10" height="17" fill="#fff" stroke="#777" stroke-width="1.3"/><path d="M11 7v8h3.5V5" fill="none" stroke="#777" stroke-width="1.3"/>`,
  groupadd: `<rect x="3" y="6" width="10" height="15" fill="none" stroke="#777" stroke-width="1.4"/><rect x="8" y="2" width="10" height="17" fill="#fff" stroke="#777" stroke-width="1.4"/><path d="M11 7v8h3.5V5" fill="none" stroke="#777" stroke-width="1.4"/>${plus}`,
  eye: `<path d="M1 11c6-7 15-7 22 0-7 7-16 7-22 0z" fill="#d8dee4" stroke="#999"/><circle cx="11" cy="11" r="5" fill="#5d83ad" stroke="#2d4a6d"/><circle cx="11" cy="11" r="2" fill="#111"/><path d="M15 20h6l-3 3z" fill="#444"/>`,
  funnel: `<path d="M1 2h22v3l-8 8v10l-6-3v-7L1 5z" fill="#6d9ec9" stroke="#4a7aa5"/><path d="M1 2h22v3H1z" fill="#f3d84a"/>`,
  eps: `<text x="7" y="15" text-anchor="middle" font-family="Liberation Serif" font-size="20" fill="#ccc">ε</text><rect x="11" y="13" width="10" height="9" fill="#ddd"/>`,
  expand: `<rect x="1" y="1" width="8" height="22" fill="none" stroke="#aaa" stroke-dasharray="2 2"/><path d="M1 5h3M1 12h3M1 19h3" stroke="#e79b2c" stroke-width="3"/><path d="M12 1h6v12h5l-8 10-8-10h5z" fill="#5d8dc2" stroke="#3a628f"/>`,
  collapse: `<rect x="1" y="1" width="8" height="22" fill="none" stroke="#aaa" stroke-dasharray="2 2"/><path d="M1 5h3M1 12h3M1 19h3" stroke="#e79b2c" stroke-width="3"/><path d="M12 23h6V11h5L15 1 7 11h5z" fill="#5d8dc2" stroke="#3a628f"/>`,
  remove: `<rect x="2" y="3" width="15" height="15" fill="#fff" stroke="#777" stroke-width="1.3"/><rect x="13" y="14" width="11" height="9" rx="1" fill="#e0402f"/><path d="M15 18.5h7" stroke="#fff" stroke-width="2"/>`,

  sidemap: `<rect x="1" y="3" width="22" height="17" fill="#c8d6e6" stroke="#ccc"/><path d="M4 8l4-2 3 3-2 3-3-1zM13 6l6 1-1 4-4 1z" fill="#7d93ad"/><path d="M1 20h22" stroke="#eee" stroke-width="2.5"/>`,
  sidechart: `<path d="M2 3h19v17H2z" fill="#e8e8e6" stroke="#bbb"/><path d="M4 5v14h15M5 10l5 4 3-3 5 5" fill="none" stroke="#667"/>`,
  sidetree: `<rect x="7" y="1" width="10" height="7" fill="#e05050"/><rect x="1" y="16" width="10" height="7" fill="#f0d050"/><rect x="13" y="16" width="10" height="7" fill="#8fc0e8"/><path d="M12 8v4M4 16v-4h16v4M8 8v8M16 8v8" stroke="#e0a03a" stroke-width="1.5" fill="none"/>`,
  sideundo: `<path d="M11 2L4 8l7 5v-3c3 0 5 1 5 4 2-5-1-8-5-8z" fill="#60a56a"/><path d="M13 11l7 6-7 5v-3c-3 0-5 1-5 4-2-5 1-8 5-8z" fill="#e07c2c"/>`,
  undoO: `<path d="M11 5l-7 6 7 6v-4h3c2 0 4 1 4 4 2-5 0-8-4-8h-3z" fill="#e88a4c"/>`,
  redoG: `<path d="M13 5l7 6-7 6v-4h-3c-2 0-4 1-4 4-2-5 0-8 4-8h3z" fill="#6ba476"/>`,
  chipgrey: chip('#f2f2f2').replaceAll('#444', '#888'),
  mouse: `<path d="M9 3c6-2 9 5 7 11s-7 9-10 5S4 5 9 3z" fill="#fff" stroke="#222" stroke-width="1.5"/><path d="M6 6l12 14M5 12l10-4M7 18l11-6" stroke="#222" stroke-width="1.3"/><path d="M14 2l6 8" stroke="#999" stroke-width="2"/>`,
  globegrey: `<circle cx="12" cy="12" r="10" fill="#cfcfcf" stroke="#888"/><path d="M2 12h20M12 2v20M4 7h16M4 17h16" stroke="#888" fill="none"/><ellipse cx="12" cy="12" rx="5" ry="10" fill="none" stroke="#888"/>`
}

// x is the centre of the item in the window, margins are worked out from those
function place(list) {
  let right = 0
  return list.map(([i, x, opt = {}]) => {
    const w = opt.w || (i === 'handle' ? 6 : i === 'sep' ? 1 : i === 'dd' ? 8 : 32)
    const ml = x - w / 2 - right
    right = x + w / 2
    return { i, ml, ...opt }
  })
}
const d = { dis: true }
const toolbars = [
  place([['handle', 6], ['new', 28, { box: true }], ['open', 61], ['save', 94], ['layoutnew', 127], ['layoutmgr', 160], ['style', 193], ['handle', 220],
    ['hand', 242], ['pan', 275], ['zin', 308, { on: true }], ['zout', 341], ['zfull', 374], ['zsel', 407, d], ['zlayer', 440], ['z11', 475], ['zlast', 507], ['znext', 540, d],
    ['newmap', 573], ['new3d', 606], ['bookmark', 638], ['bookmarks', 672], ['clock', 705], ['refresh', 737], ['handle', 764], ['identify', 787], ['table', 818, d], ['abacus', 851, d],
    ['gear', 884], ['sigma', 917], ['ruler', 951], ['dd', 973], ['speech', 995], ['gearplay', 1030, d], ['dd', 1051, d], ['textT', 1075], ['dd', 1096]]),
  place([['handle', 6], ['dsm', 28], ['gpkg', 61], ['vnew', 94], ['feat', 127], ['chipstar', 160], ['sep', 181], ['vboxstar', 200], ['sep', 220], ['handle', 234],
    ['pencils', 256, d], ['pencil', 288, d], ['savepen', 321, d], ['blobstar', 354, d], ['toolx', 390, d], ['dd', 410, d], ['listpen', 432, d], ['trash', 465, d], ['scissors', 498, d], ['copy', 531, d], ['paste', 564, d], ['undo', 597, d], ['redo', 630, d],
    ['handle', 658], ['abc', 679], ['chartdis', 712, d], ['sep', 733], ['abpin', 752], ['abcred', 785], ['sep', 807], ['abpindis', 825, d], ['abceye', 858, d], ['abcarr', 892, d], ['abcrot', 925, d], ['abcpen', 958, d],
    ['handle', 985], ['db', 1007], ['handle', 1034], ['hex', 1056], ['globeadd', 1089], ['globefind', 1122], ['globebino', 1155], ['handle', 1182], ['help', 1204], ['handle', 1231], ['nodecheck', 1253], ['tablesync', 1285]]),
  place([['handle', 6], ['selarrow', 28, d], ['dd', 50, d], ['form', 72, d], ['dd', 95, d], ['deselect', 119], ['dd', 140], ['selpin', 163], ['handle', 190], ['locate', 211],
    ['combo', 272.5, { w: 87 }], ['find', 372, { w: 108 }], ['handle', 437], ['chart', 459], ['handle', 486], ['zoomg', 508], ['mapbrush', 541], ['handle', 568],
    ['python', 590], ['flame', 623], ['folderarrow', 656], ['split', 689], ['leaf', 722], ['earth', 755], ['butterfly', 788], ['igreen', 821], ['handle', 847], ['route', 870], ['handle', 897]])
]

const leftIcons = [
  { i: 'vplus' }, { i: 'checkplus' }, { i: 'meshplus' }, { i: 'commaplus' }, { i: 'featplus' }, { i: 'vboxplus' },
  { i: 'elephant', dd: true }, { i: 'globeplus', dd: true }, { i: 'globebig' }, { i: 'globev', dd: true }, { i: 'gpkgsmall', dd: true }
]

const layerTools = [
  { i: 'brush', w: 24, on: true }, { i: 'groupadd', w: 26 }, { i: 'eye', w: 25 }, { i: 'funnel', w: 24 }, { i: 'eps', w: 36, dd: true }, { i: 'expand', w: 26 }, { i: 'collapse', w: 24 }, { i: 'remove', w: 24 }
]

const layerRows = [
  { lvl: 0, on: true, kind: 'poly', name: 'kiambu_admin_boundary', style: 'bold' },
  { lvl: 0, arrow: 'a-r', kind: 'raster', name: 'reprojected_HRSL_Kiambu_Population', style: 'off' },
  { lvl: 0, arrow: 'a-r', kind: 'group', name: 'LandCover' },
  { lvl: 0, arrow: 'a-r', kind: 'group', name: 'SRTM-DEM' },
  { lvl: 0, arrow: 'a-d', on: true, kind: 'group', name: 'Reprojected' },
  { lvl: 1, arrow: 'a-r', kind: 'raster', name: 'reprojected_merged_SRTM_DEM', style: 'off' },
  { lvl: 1, arrow: 'a-r', kind: 'raster', name: 'merged_SRTM_DEM', style: 'off' },
  { lvl: 1, arrow: 'a-r', kind: 'raster', name: 'reprojected_LandCover_2019', style: 'off' },
  { lvl: 1, kind: 'raster', name: 'reprojected_LandCover_2018', style: 'off' },
  { lvl: 1, kind: 'raster', name: 'reprojected_LandCover_2017', style: 'off' },
  { lvl: 1, kind: 'raster', name: 'reprojected_LandCover_2016', style: 'off' },
  { lvl: 1, kind: 'raster', name: 'reprojected_LandCover_2015', style: 'off' },
  { lvl: 1, arrow: 'a-d', on: true, kind: 'group', name: 'Clipped' },
  { lvl: 2, arrow: 'a-r', kind: 'raster', name: '<=2200', style: 'off' },
  { lvl: 2, arrow: 'a-r', kind: 'raster', name: 'clipped_reprojected_merged_SRTM_DEM', style: 'off', chip: true },
  { lvl: 2, arrow: 'a-r', kind: 'raster', name: 'clipped_reprojected_HRSL_Kiambu_Population', style: 'off' },
  { lvl: 2, arrow: 'a-r', on: true, kind: 'raster', name: 'clipped_reprojected_LandCover_2019', style: 'current', sel: true },
  { lvl: 2, kind: 'raster', name: 'clipped_reprojected_LandCover_2018', style: 'off' },
  { lvl: 2, kind: 'raster', name: 'clipped_reprojected_LandCover_2017', style: 'off' },
  { lvl: 2, kind: 'raster', name: 'clipped_reprojected_LandCover_2016', style: 'off' },
  { lvl: 2, kind: 'raster', name: 'clipped_reprojected_LandCover_2015', style: 'off' },
  { lvl: 0, arrow: 'a-d', on: true, kind: 'raster', name: 'Sentinel-2 cloudless layer for 2020 by EOX - 4326', style: 'bold' }
]

const sideIcons = ['sidemap', 'sidechart', 'sidetree', 'sideundo']
const classes = [
  { v: 20, color: '#fdb81e', label: 'Shrubs' },
  { v: 30, color: '#ffff3c', label: 'Herbaceous vegetation' },
  { v: 40, color: '#ee9bfb', label: 'Agriculture' },
  { v: '', color: '#ff0000', label: '' }
]

// region outline in the crop's 3x coordinates
const outlinePts = [[350, 55], [400, 90], [430, 130], [470, 165], [510, 175], [540, 195], [600, 225], [660, 262], [710, 285], [760, 340], [830, 400], [885, 435], [945, 490], [960, 515], [1000, 500], [1005, 478], [1030, 510], [1090, 525], [1100, 545], [1130, 540], [1160, 550], [1190, 535], [1220, 520], [1285, 487], [1340, 485], [1380, 520], [1430, 570], [1505, 608], [1472, 650], [1420, 610], [1370, 570], [1300, 580], [1250, 590], [1205, 630], [1195, 660], [1205, 700], [1190, 745], [1160, 790], [1150, 825], [1090, 860], [1075, 885], [1045, 870], [1010, 800], [950, 820], [900, 845], [880, 810], [830, 835], [780, 820], [750, 800], [795, 745], [740, 725], [715, 745], [722, 775], [680, 775], [640, 805], [610, 800], [540, 785], [530, 815], [470, 830], [430, 880], [390, 890], [340, 975], [300, 955], [190, 935], [40, 905], [100, 810], [130, 680], [185, 615], [210, 560], [205, 520], [225, 440], [200, 400], [180, 360], [150, 328], [175, 290], [210, 270], [225, 235], [205, 170], [260, 175], [300, 130], [330, 100], [300, 70], [340, 65]]
const outline = outlinePts.map(p => p.join(',')).join(' ')

let seed = 12345
const rnd = () => {
  seed = (seed * 16807) % 2147483647
  return seed / 2147483647
}
const gauss = () => rnd() + rnd() - 1

function inside(x, y) {
  let hit = false
  for (let i = 0, j = outlinePts.length - 1; i < outlinePts.length; j = i++) {
    const [xi, yi] = outlinePts[i]
    const [xj, yj] = outlinePts[j]
    if ((yi > y) !== (yj > y) && x < ((xj - xi) * (y - yi)) / (yj - yi) + xi) hit = !hit
  }
  return hit
}
const cell = (x, y) => `M${Math.round(x / 3) * 3} ${Math.round(y / 3) * 3}h3v3h-3z`

function scatter(colour, n, box) {
  let path = ''
  for (let k = 0; k < n; k++) {
    const x = box[0] + rnd() * (box[2] - box[0])
    const y = box[1] + rnd() * (box[3] - box[1])
    if (inside(x, y)) path += cell(x, y)
  }
  return { c: colour, d: path }
}
function clusters(colour, list) {
  let path = ''
  for (const [cx, cy, rx, ry, n] of list) {
    for (let k = 0; k < n; k++) {
      const x = cx + gauss() * rx
      const y = cy + gauss() * ry
      if (inside(x, y)) path += cell(x, y)
    }
  }
  return { c: colour, d: path }
}

const specks = [
  scatter('#ff0000', 1300, [240, 300, 1000, 860]),
  scatter('#3ee4c0', 1100, [240, 300, 860, 720]),
  scatter('#7f9a10', 320, [300, 380, 800, 720]),
  scatter('#b648c9', 260, [300, 450, 700, 760]),
  scatter('#ffff3c', 60, [300, 450, 1200, 800]),
  scatter('#ff0000', 600, [620, 280, 900, 470]),
  scatter('#0a3cc8', 20, [760, 480, 900, 660])
]
const topSpecks = [
  clusters('#ff0000', [[1050, 535, 60, 24, 300], [985, 520, 28, 14, 260], [1145, 565, 18, 24, 200], [1060, 585, 24, 16, 140], [985, 572, 12, 10, 60], [925, 620, 26, 24, 380], [965, 590, 20, 12, 60],
    [800, 712, 60, 22, 600], [860, 690, 30, 30, 520], [910, 675, 18, 26, 240], [790, 795, 34, 20, 100], [835, 805, 26, 14, 100], [708, 768, 14, 8, 90],
    [370, 860, 70, 36, 1100], [340, 920, 50, 20, 260], [330, 800, 34, 40, 340], [420, 800, 90, 32, 800], [480, 770, 80, 28, 500], [520, 800, 30, 14, 180], [590, 700, 65, 50, 700], [620, 745, 36, 20, 220],
    [480, 692, 20, 12, 110], [290, 650, 32, 18, 180], [265, 600, 12, 10, 50], [440, 600, 32, 10, 110], [520, 555, 22, 12, 80], [280, 470, 14, 4, 20]]),
  clusters('#3ee4c0', [[215, 350, 40, 36, 300], [240, 300, 60, 36, 220], [350, 130, 40, 40, 170], [290, 190, 32, 50, 200], [385, 210, 32, 16, 100], [400, 660, 28, 28, 130], [310, 550, 14, 20, 50], [300, 800, 16, 24, 60], [820, 530, 30, 18, 100], [400, 600, 12, 12, 30], [230, 590, 16, 60, 130]]),
  clusters('#7f9a10', [[130, 780, 44, 100, 280], [100, 870, 54, 34, 170], [150, 900, 26, 28, 100], [195, 310, 46, 30, 120], [225, 470, 14, 70, 90], [300, 260, 28, 60, 70], [1340, 520, 12, 10, 14], [840, 760, 14, 16, 35]]),
  clusters('#ffff3c', [[290, 215, 26, 36, 70], [330, 148, 8, 8, 25], [1095, 565, 20, 10, 40], [1075, 597, 12, 8, 22], [860, 730, 40, 30, 110], [1150, 622, 18, 10, 24], [950, 632, 18, 6, 14], [790, 800, 28, 18, 20], [150, 700, 26, 46, 20]]),
  clusters('#ee9bfb', [[1070, 820, 32, 22, 160], [940, 800, 28, 34, 170], [960, 765, 56, 14, 90], [1130, 810, 12, 6, 8]]),
  clusters('#fdb81e', [[1120, 555, 8, 10, 14], [870, 720, 14, 24, 22], [1010, 490, 5, 14, 14]]),
  clusters('#0a3cc8', [[1345, 510, 6, 6, 7], [860, 655, 7, 4, 5], [795, 595, 4, 4, 4], [855, 485, 3, 3, 3]])
]

let urbanPath = ''
for (let k = 0; k < 420; k++) {
  const t = rnd()
  const x = t < 0.7 ? 675 + gauss() * 60 : 722 + gauss() * 32
  const y = t < 0.7 ? 580 + gauss() * 35 : 640 + gauss() * 40
  urbanPath += `M${Math.round(x)} ${Math.round(y)}h1v1h-1z`
}
const urban = urbanPath
</script>

<style scoped>
.qgis { width: 1365px; height: 729px; display: flex; flex-direction: column; overflow: hidden; background: #f0f0f0; font: 12px Roboto, sans-serif; color: #000; }
.titlebar { height: 22px; flex: none; background: #fff; display: flex; align-items: center; }
.logo { width: 20px; height: 20px; margin-left: 2px; }
.wintitle { margin-left: 1px; font-size: 12px; }
.winbtns { margin-left: auto; display: flex; align-items: center; }
.winbtns svg { width: 12px; height: 12px; }
.wmin { margin-right: 33px; }
.wmax { margin-right: 34px; }
.wclose { margin-right: 19px; }
.menubar { height: 19px; flex: none; display: flex; align-items: center; padding-left: 10px; gap: 14px; background: #f0f0f0; border-bottom: 1px solid #d9d9d9; font-size: 11.6px; }
.toolbar { height: 38px; flex: none; display: flex; align-items: center; background: linear-gradient(#fafafa, #f0f0f0); border-bottom: 1px solid #bbb; }
.toolbar:nth-of-type(5) { height: 37px; }
.handle { width: 6px; height: 21px; flex: none; background-image: radial-gradient(circle, #aaa .7px, transparent .9px); background-size: 3px 3px; }
.sep { width: 1px; height: 26px; flex: none; background: #c8c8c8; }
.dd { flex: none; width: 0; height: 0; border-left: 4px solid transparent; border-right: 4px solid transparent; border-top: 5px solid #555; }
.dd.off { border-top-color: #bbb; }
.tbtn { width: 32px; height: 32px; flex: none; display: flex; align-items: center; justify-content: center; border: 1px solid transparent; border-radius: 3px; box-sizing: border-box; }
.tbtn.pressed { background: #d9d9d9; border-color: #b4b4b4; }
.tbtn.boxed { background: #fff; border-color: #bcbcbc; }
.ic { width: 24px; height: 24px; flex: none; overflow: visible; }
.ic.dis { opacity: .6; }
.ic20 { width: 19px; height: 19px; flex: none; overflow: visible; }
.combo { height: 22px; flex: none; box-sizing: border-box; display: flex; align-items: center; padding: 1px 0 0 4px; background: #fff; border: 1px solid #adadad; border-radius: 3px; }
.caret { margin-left: auto; margin-right: 7px; width: 0; height: 0; border-left: 4px solid transparent; border-right: 4px solid transparent; border-top: 5px solid #444; }
.findbox { height: 22px; flex: none; box-sizing: border-box; display: flex; align-items: center; padding: 1px 0 0 2px; background: #fff; border: 1px solid #adadad; border-radius: 2px; color: #777; }

.body { height: 549px; flex: none; display: flex; }
.leftbar { width: 51px; flex: none; border-right: 1px solid #c8c8c8; display: flex; flex-direction: column; align-items: flex-start; }
.hhandle { width: 18px; height: 6px; margin: 3px 0 0 17px; flex: none; background-image: radial-gradient(circle, #aaa .7px, transparent .9px); background-size: 3px 3px; }
.lbtn { height: 32.2px; flex: none; display: flex; align-items: center; padding-left: 6px; gap: 7px; }
.lbtn:first-of-type { margin-top: 1px; }
.layers { width: 398px; flex: none; display: flex; flex-direction: column; }
.docktitle { height: 24px; flex: none; box-sizing: border-box; display: flex; align-items: center; padding: 0 2px 2px 4px; }
.dockbtns { margin-left: auto; display: flex; gap: 4px; }
.dfloat, .dclose { width: 11px; height: 11px; box-sizing: border-box; border: 1px solid #777; border-radius: 2px; background: #e9e9e9; display: block; position: relative; }
.dfloat::after { content: ""; position: absolute; left: 2px; top: 2px; width: 3px; height: 3px; border: 1px solid #444; }
.dclose::after { content: "×"; position: absolute; left: 0; top: -3px; width: 9px; font: 700 13px/15px "Liberation Sans", sans-serif; text-align: center; color: #333; }
.layertools { height: 27px; flex: none; display: flex; align-items: center; padding-left: 4px; }
.ltool { height: 24px; flex: none; box-sizing: border-box; display: flex; align-items: center; justify-content: center; gap: 2px; border: 1px solid transparent; border-radius: 3px; }
.ltool.pressed { background: #dcdcdc; border-color: #b4b4b4; }
.tree { height: 470px; flex: none; box-sizing: border-box; border: 1px solid #a0a0a0; background: #fff; }
.trow { height: 18px; display: flex; align-items: center; position: relative; white-space: nowrap; }
.trow.sel { background: #127fd9; }
.arrow { width: 8px; height: 8px; flex: none; margin-right: 4px; margin-left: -1px; position: relative; }
.a-r::after { content: ""; position: absolute; left: 2px; top: 0; border-left: 5px solid #555; border-top: 4px solid transparent; border-bottom: 4px solid transparent; }
.a-d::after { content: ""; position: absolute; left: 0; top: 2px; border-top: 5px solid #555; border-left: 4px solid transparent; border-right: 4px solid transparent; }
.sel .a-r::after { border-left-color: #333; }
.cb { width: 14px; height: 14px; flex: none; box-sizing: border-box; background: #fff; border: 1px solid #bcbcbc; display: block; margin: 0 0 0 5px; }
.cb svg { display: block; width: 12px; height: 12px; }
.licon { width: 20px; flex: none; margin-left: 8px; display: flex; align-items: center; }
.k13 { width: 13px; height: 13px; flex: none; }
.k16 { width: 16px; height: 16px; flex: none; margin-left: -2px; }
.lname { font-size: 12px; padding-top: 2px; }
.lname.off { color: #777; font-style: italic; font-size: 12.8px; }
.lname.bold { font-weight: 700; font-size: 12.2px; }
.lname.current { color: #fff; font-style: italic; font-size: 12.8px; text-decoration: underline; }
.chipbtn { position: absolute; right: 5px; top: 0; width: 16px; height: 16px; box-sizing: border-box; background: #f0f0f0; border: 1px solid #e0e0e0; border-radius: 2px; }
.chipbtn svg { width: 14px; height: 14px; display: block; }
.bottomtabs { display: flex; height: 24px; flex: none; align-items: flex-start; margin-top: 1px; font-size: 11.2px; }
.btab { height: 21px; box-sizing: border-box; padding-top: 2px; display: flex; align-items: center; justify-content: center; background: #e3e3e3; border: 1px solid #bdbdbd; border-top: 0; border-radius: 0 0 2px 2px; }
.btab.active { width: 56px; height: 23px; background: #f5f5f5; }
.btab.border { width: 82px; }
.btab.browser { width: 62px; }

.map { width: 512px; height: 544px; flex: none; margin: 2px 0 0 7px; }
.mapsvg { display: block; }

.rightpanel { width: 389px; flex: none; margin-left: 7px; display: flex; flex-direction: column; }
.layercombo { margin: 0 3px; height: 23px; gap: 4px; padding-left: 7px; font-size: 11px; }
.styling { height: 199px; flex: none; display: flex; margin-left: 3px; }
.side { width: 38px; flex: none; }
.sidebrush { height: 38px; display: flex; align-items: center; justify-content: center; }
.sidedark { height: 161px; background: #5a5a5a; display: flex; flex-direction: column; align-items: center; gap: 9px; padding-top: 3px; box-sizing: border-box; }
.stylemain { flex: 1; display: flex; flex-direction: column; }
.scrollarea { height: 170px; display: flex; position: relative; }
.scrollinner { width: 304px; margin-left: 15px; flex: none; }
.groupline { height: 9px; display: flex; }
.groupline span { width: 233px; height: 4px; box-sizing: border-box; margin: 5px 0 0 58px; border: 1px solid #bbb; border-top: 0; border-radius: 0 0 4px 4px; }
.groupline .gl2 { width: 12px; margin-left: 0; }
.legend { margin-top: 7px; display: flex; width: 304px; height: 154px; border: 1px solid #b8b8b8; border-bottom: 0; box-sizing: border-box; }
.legendbody { flex: 1; overflow: hidden; background: #fff; min-width: 0; }
.lhead { height: 19px; box-sizing: border-box; display: flex; align-items: center; background: linear-gradient(#fdfdfd, #f0f0f0); border-bottom: 1px solid #b8b8b8; }
.lhead span { height: 100%; display: flex; align-items: center; border-right: 1px solid #ccc; padding: 2px 0 0 2px; box-sizing: border-box; }
.c1 { width: 100px; flex: none; }
.c2 { width: 59px; flex: none; }
.c3 { flex: 1; }
.lhead .c3 { border-right: 0; }
.lrows { height: 134px; overflow: hidden; padding-top: 1px; box-sizing: border-box; }
.lrow { height: 44px; display: flex; align-items: center; }
.val { padding-left: 23px; box-sizing: border-box; }
.lrow .c2 { display: flex; padding-left: 8px; box-sizing: border-box; }
.swatch { display: block; width: 42px; height: 42px; border-radius: 7px; }
.lab { padding-left: 3px; white-space: nowrap; }
.vscroll { flex: none; display: flex; flex-direction: column; background: #f0f0f0; }
.vscroll i { display: block; }
.inner { width: 14px; border-left: 1px solid #c8c8c8; }
.up { height: 15px; position: relative; }
.up::after { content: ""; position: absolute; left: 3px; top: 5px; border-bottom: 4px solid #666; border-left: 4px solid transparent; border-right: 4px solid transparent; }
.inner .thumb { height: 110px; background: #fff; border-bottom: 1px solid #c8c8c8; }
.inner .rest { flex: 1; background: #e6e6e6; }
.outer { position: absolute; left: 331px; top: 7px; width: 14px; height: 163px; }
.outer .band { height: 13px; background: #e6e6e6; }
.outer .thumb { height: 27px; background: #f9f9f9; border-bottom: 1px solid #ccc; flex: none; }
.dn { margin-top: auto; height: 15px; position: relative; }
.dn::after { content: ""; position: absolute; left: 3px; top: 5px; border-top: 4px solid #666; border-left: 4px solid transparent; border-right: 4px solid transparent; }
.actions { flex: 1; display: flex; align-items: center; padding: 5px 3px 0; }
.sbtn { width: 24px; height: 23px; box-sizing: border-box; background: #f6f6f6; border: 1px solid #adadad; border-radius: 3px; margin-right: 6px; flex: none; }
.sbtn svg { display: block; width: 22px; height: 21px; }
.live { margin-left: 115px; }
.livetext { margin-left: 4px; }
.applybtn { margin-left: auto; width: 80px; height: 22px; box-sizing: border-box; border: 1px solid #adadad; border-radius: 3px; background: #f6f6f6; display: flex; align-items: center; justify-content: center; }
.splitdots { height: 6px; flex: none; background: radial-gradient(circle, #aaa .7px, transparent .9px) center / 3px 3px no-repeat; }
.valuetitle { margin-top: 2px; }
.enable { height: 18px; flex: none; margin: 6px 0 0 5px; display: flex; align-items: center; gap: 4px; font-size: 11px; }
.enable .cb { margin-left: 4px; }
.vtabs { margin: 5px 0 0 9px; height: 24px; flex: none; display: flex; align-items: flex-end; font-size: 11px; }
.vtab { height: 21px; box-sizing: border-box; display: flex; align-items: center; justify-content: center; background: #ececec; border: 1px solid #c4c4c4; border-bottom: 0; border-radius: 2px 2px 0 0; margin-right: 1px; }
.vtab.active { width: 50px; height: 24px; background: #fff; margin-bottom: -1px; position: relative; z-index: 1; }
.vtab.g { width: 52px; }
.vtab.o { width: 60px; }
.vpane { width: 372px; height: 186px; flex: none; margin-left: 9px; box-sizing: border-box; background: #fff; border: 1px solid #b8b8b8; padding: 11px 10px 0; }
.decimals { height: 20px; display: flex; align-items: center; }
.decimals .cb { margin-left: 0; }
.dectext { margin-left: 4px; width: 50px; font-size: 11px; }
.spin { margin-left: 4px; height: 20px; width: 39px; box-sizing: border-box; border: 1px solid #adadad; border-radius: 3px; display: flex; align-items: center; padding-left: 4px; justify-content: space-between; }
.spinbtns { width: 14px; height: 100%; flex: none; border-left: 1px solid #cfcfcf; position: relative; display: block; box-sizing: border-box; }
.spinbtns::before { content: ""; position: absolute; left: 3px; top: 3px; border-bottom: 4px solid #666; border-left: 4px solid transparent; border-right: 4px solid transparent; }
.spinbtns::after { content: ""; position: absolute; left: 3px; bottom: 3px; border-top: 4px solid #666; border-left: 4px solid transparent; border-right: 4px solid transparent; }
.vtable { margin-top: 7px; height: 137px; box-sizing: border-box; border: 1px solid #c0c0c0; }
.vhead { height: 19px; display: flex; background: #f2f2f2; }
.vhead span { display: flex; align-items: center; justify-content: center; box-sizing: border-box; border-right: 1px solid #c8c8c8; border-bottom: 1px solid #c8c8c8; }
.vcorner { width: 11px; }
.vcol1 { width: 200px; }
.vcol2 { width: 50px; }
.vrow { height: 30px; display: flex; }
.vrow span { display: flex; align-items: center; box-sizing: border-box; border-right: 1px solid #c8c8c8; border-bottom: 1px solid #c8c8c8; white-space: nowrap; overflow: hidden; }
.vnum { width: 11px; background: #f0f0f0; justify-content: center; }
.vcell1 { width: 200px; padding-left: 3px; }
.vcell2 { width: 50px; padding-left: 3px; }
.vempty { width: 11px; height: 26px; background: #f0f0f0; }
.coordline { margin: 7px 0 0 9px; white-space: nowrap; font-size: 11.1px; }

.statusbar { height: 20px; flex: none; box-sizing: border-box; padding-top: 1px; display: flex; align-items: center; background: #f0f0f0; font-size: 11px; }
.statusbar > * { flex: none; }
.st { white-space: nowrap; padding-top: 2px; }
.stbox { height: 19px; box-sizing: border-box; display: flex; align-items: center; background: #fff; border: 1px solid #c4c4c4; border-radius: 2px; padding: 2px 0 0 4px; }
.stbox .spinbtns, .stbox .caretbox { margin-top: -2px; height: 17px; }
.locator { width: 200px; height: 19px; margin-left: 3px; box-sizing: border-box; background: #fff; border: 1px solid #c4c4c4; border-bottom: 0; border-radius: 2px 2px 0 0; display: flex; align-items: center; padding-left: 8px; gap: 6px; }
.zonal { padding-top: 2px; }
.s14 { width: 13px; height: 13px; flex: none; }
.clearx { width: 14px; height: 11px; margin-left: auto; margin-right: 7px; }
.coordlab { margin-left: 352px; width: 53px; }
.coordval { width: 96px; margin-left: 4px; justify-content: center; padding: 2px 0 0; }
.mouse { width: 18px; height: 18px; margin-left: 9px; }
.scalelab { margin-left: 11px; width: 26px; }
.scalebox { width: 79px; margin-left: 5px; padding-left: 2px; }
.caretbox { margin-left: auto; width: 17px; border-left: 1px solid #c4c4c4; position: relative; box-sizing: border-box; }
.caretbox::after { content: ""; position: absolute; left: 4px; top: 6px; border-top: 5px solid #555; border-left: 4px solid transparent; border-right: 4px solid transparent; }
.lock { width: 13px; height: 16px; margin-left: 12px; }
.maglab { margin-left: 10px; width: 42px; }
.magbox { width: 85px; margin-left: 5px; padding-left: 2px; justify-content: space-between; }
.rotlab { margin-left: 9px; width: 42px; }
.rotbox { width: 84px; margin-left: 9px; padding-left: 4px; justify-content: space-between; }
.rendercb { margin-left: 7px; }
.renderlab { margin-left: 4px; width: 34px; }
.epsg { width: 18px; height: 18px; margin-left: 18px; }
.epsgtxt { margin-left: 1px; width: 60px; }
.msg { width: 16px; height: 16px; margin-left: 19px; }
.taskstrip { height: 2px; flex: none; background: #1b2433; position: relative; }
.taskstrip i { position: absolute; left: 47px; width: 343px; height: 2px; background: #c4c8cc; }
</style>

<style>
html, body { margin: 0; background: #f0f0f0; overflow: hidden; }
</style>
